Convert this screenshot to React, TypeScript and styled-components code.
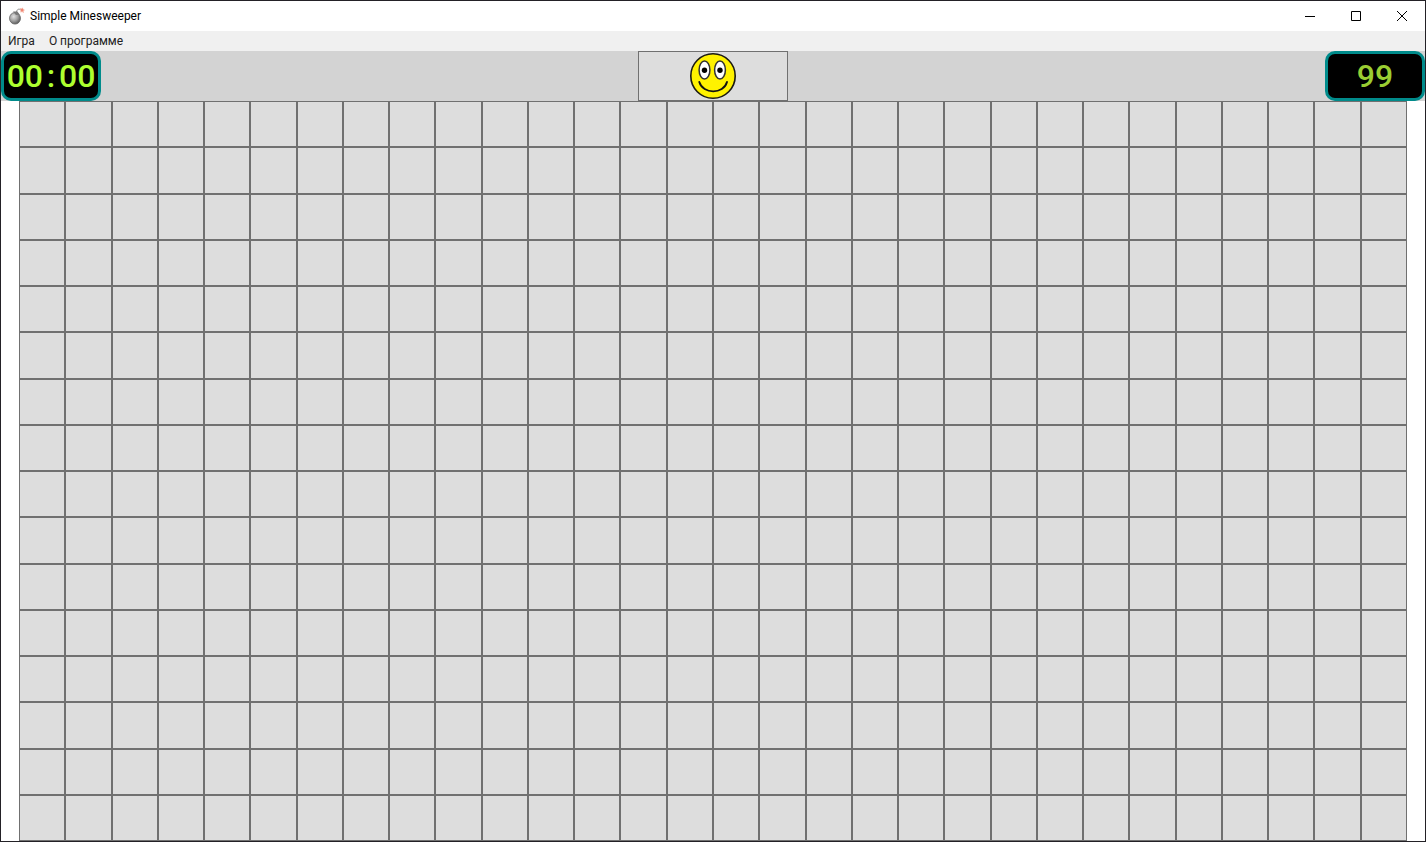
import React from 'react';
import styled, { createGlobalStyle } from 'styled-components';

const ROWS = 16;
const COLUMNS = 30;

const GlobalStyle = createGlobalStyle`
  * { box-sizing: border-box; }
  body {
    margin: 0;
    background: #fff;
    font: 12px/16px Roboto, "Open Sans", sans-serif;
    color: #000;
  }
  button { font: inherit; color: inherit; border-radius: 0; }
`;

const AppWindow = styled.div`
  display: flex;
  flex-direction: column;
  min-height: 100vh;
  border: 1px solid #232126;
  background: #fff;
`;

const TitleBar = styled.header`
  display: flex;
  align-items: center;
  height: 30px;
  padding-left: 7px;
`;

const Title = styled.h1`
  flex: 1;
  margin: 0;
  padding-left: 5px;
  font-size: 12px;
  line-height: 16px;
  font-weight: 400;
`;

const CaptionButton = styled.button`
  display: flex;
  align-items: center;
  justify-content: center;
  width: 46px;
  height: 30px;
  padding: 0;
  border: 0;
  background: transparent;
  &:hover { background: #e5e5e5; }
`;

const MenuBar = styled.nav`
  display: flex;
  height: 20px;
  background: #f0f0f0;
`;

const MenuButton = styled.button`
  padding: 0 7px;
  border: 0;
  background: transparent;
  color: #212121;
  &:hover { background: #d5e8f8; }
`;

const StatusBar = styled.section`
  display: grid;
  grid-template-columns: 1fr 150px 1fr;
  height: 50px;
  background: #d3d3d3;
`;

const Display = styled.output<{ $color: string; $align: 'start' | 'end' }>`
  display: flex;
  align-items: center;
  justify-content: center;
  justify-self: ${({ $align }) => $align};
  width: 100px;
  height: 50px;
  border: 3px solid #008b8b;
  border-radius: 10px;
  background: #000;
  color: ${({ $color }) => $color};
  font-family: Roboto, sans-serif;
  font-size: 32px;
  font-weight: 500;
  line-height: 44px;
`;

const Colon = styled.span`
  width: 16px;
  text-align: center;
`;

const FaceButton = styled.button`
  display: flex;
  align-items: center;
  justify-content: center;
  padding: 0;
  border: 1px solid #707070;
  background: #ddd;
`;

const BoardArea = styled.main`
  padding: 0 18px;
`;

const Board = styled.div`
  display: grid;
  grid-template-columns: repeat(${COLUMNS}, 1fr);
  grid-template-rows: repeat(${ROWS}, 1fr);
  aspect-ratio: ${COLUMNS} / ${ROWS};
`;

const Cell = styled.button`
  min-width: 0;
  min-height: 0;
  padding: 0;
  border: 1px solid #707070;
  background: #ddd;
  &:hover { background: #bee6fd; }
`;

const BombIcon = () => (
  <svg width="17" height="18" viewBox="0 0 17 18" aria-hidden="true">
    <defs>
      <radialGradient id="bomb" cx="38%" cy="35%" r="70%">
        <stop offset="0" stopColor="#e0e0e0" />
        <stop offset="0.5" stopColor="#a4a4a4" />
        <stop offset="1" stopColor="#555" />
      </radialGradient>
    </defs>
    <path d="M8.500 5C9 2 11 1.500 13 3" fill="none" stroke="#888" />
    <ellipse cx="7" cy="11.300" rx="5.500" ry="5.800" fill="url(#bomb)" stroke="#666" strokeWidth="0.800" />
    <path d="M5 4.500L9.500 4.500L11.500 7.500L8 8Z" fill="#777" />
    <path d="M12 1L13.500 1.500L15 0.500L15.200 2L17 3L15.500 4L16 6L14 5L12.500 5.500L12.500 3.500Z" fill="#f6ab9a" />
    <circle cx="14" cy="3" r="1" fill="#ee7766" />
  </svg>
);

const SmileyIcon = () => (
  <svg width="48" height="48" viewBox="0 0 48 48" aria-hidden="true">
    <circle cx="24" cy="24" r="22.200" fill="#fff200" stroke="#1b1a12" strokeWidth="1.600" />
    <g fill="#fff" stroke="#333" strokeWidth="1.500">
      <ellipse cx="15.500" cy="18" rx="5.400" ry="9" />
      <ellipse cx="31" cy="18" rx="5.400" ry="9" />
    </g>
    <circle cx="15.500" cy="18.300" r="2.700" />
    <circle cx="31" cy="18.300" r="2.700" />
    <path d="M10.300 30C14 42.500 34.500 42.500 38 30" fill="none" stroke="#111" strokeWidth="1.900" strokeLinecap="round" />
  </svg>
);

const captionIcons = [
  { label: 'Свернуть', path: 'M0 5.500H10' },
  { label: 'Развернуть', path: 'M0.500 0.500H9.500V9.500H0.500Z' },
  { label: 'Закрыть', path: 'M0 0L10 10M10 0L0 10' },
];

const cells = Array.from({ length: ROWS * COLUMNS }, (_, index) => ({
  row: Math.floor(index / COLUMNS) + 1,
  column: (index % COLUMNS) + 1,
}));

export default function App() {
  return (
    <>
      <GlobalStyle />
      <AppWindow>
        <TitleBar>
          <BombIcon />
          <Title>Simple Minesweeper</Title>
          {captionIcons.map(({ label, path }) => (
            <CaptionButton key={label} type="button" aria-label={label}>
              <svg width="10" height="10" viewBox="0 0 10 10" aria-hidden="true">
                <path d={path} fill="none" stroke="#000" />
              </svg>
            </CaptionButton>
          ))}
        </TitleBar>
        <MenuBar>
          <MenuButton type="button">Игра</MenuButton>
          <MenuButton type="button">О программе</MenuButton>
        </MenuBar>
        <StatusBar>
          <Display $color="#adff2f" $align="start" aria-label="Время">
            00<Colon>:</Colon>00
          </Display>
          <FaceButton type="button" aria-label="Новая игра">
            <SmileyIcon />
          </FaceButton>
          <Display $color="#9acd32" $align="end" aria-label="Мины">99</Display>
        </StatusBar>
        <BoardArea>
          <Board>
            {cells.map(({ row, column }) => (
              <Cell
                key={`${row}-${column}`}
                type="button"
                aria-label={`Строка ${row}, столбец ${column}`}
              />
            ))}
          </Board>
        </BoardArea>
      </AppWindow>
    </>
  );
}
